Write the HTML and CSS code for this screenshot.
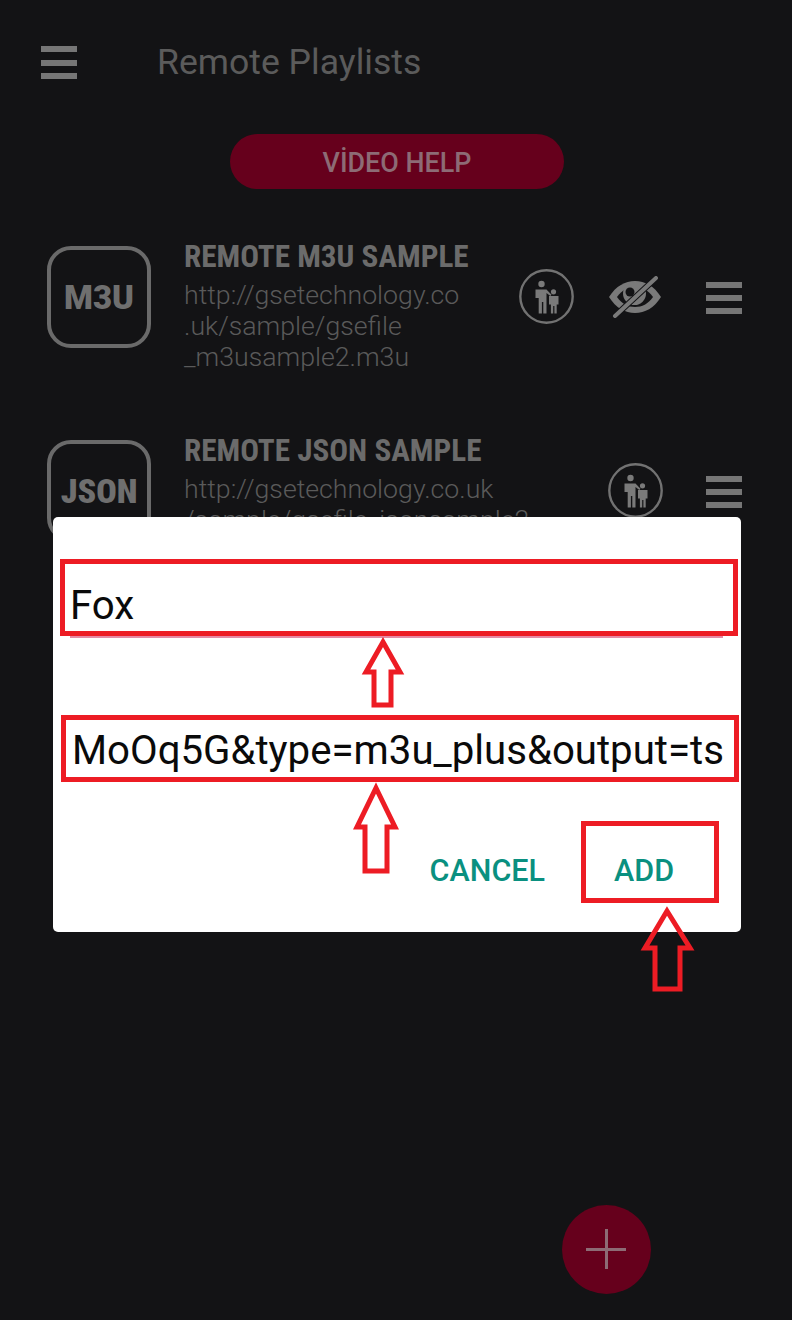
FILE: index.html
```html
<!DOCTYPE html>
<html lang="en">
<head>
<meta charset="UTF-8" />
<meta name="viewport" content="width=device-width, initial-scale=1.0"/>
<title>Remote Playlists</title>
<link rel="stylesheet" href="styles.css">
</head>
<body>

<div class="app">
  <header class="top-bar">
    <div class="bars top-bars"><span></span><span></span><span></span></div>
    <h1>Remote Playlists</h1>
  </header>

  <button type="button" class="help-btn">VİDEO HELP</button>

  <div class="playlist">
    <div class="row">
      <div class="type-box type-m3u">M3U</div>
      <div class="info">
        <h2>REMOTE M3U SAMPLE</h2>
        <p>http://gsetechnology.co<br>.uk/sample/gsefile<br>_m3usample2.m3u</p>
      </div>
      <div class="actions">
        <svg class="parental" viewBox="0 0 55 55">
          <circle cx="27.5" cy="27.5" r="26.2" fill="none" stroke="#727272" stroke-width="2.4"/>
          <circle cx="22.500" cy="15" r="3.200" fill="#7a7a7a"/>
          <path d="M16.500 20.500h11l5 5.200-1.200 1.200-3.800-3v20.600h-3.200V33h-1.400v11.500h-3.200V29h-3.200z" fill="#7a7a7a"/>
          <circle cx="34.500" cy="22.800" r="2.600" fill="#7a7a7a"/>
          <path d="M30 27h9.500v8.500h-1.800v9h-2.300V37h-1.200v7.500h-2.300v-9H30z" fill="#7a7a7a"/>
        </svg>
        <svg class="eye" viewBox="0 0 52 42">
          <path d="M0 21C7 10 16 5 26 5s19 5 26 16c-7 11-16 16-26 16S7 32 0 21z" fill="#7a7a7a"/>
          <path d="M8 21c5-7 11-10 18-10s13 3 18 10c-5 7-11 10-18 10S13 28 8 21z" fill="#131315"/>
          <circle cx="25.500" cy="17.500" r="11.500" fill="#7a7a7a"/>
          <circle cx="21" cy="16" r="4.500" fill="#131315"/>
          <path d="M6 40 47 2" stroke="#131315" stroke-width="6"/>
          <path d="M6 40 47 2" stroke="#7a7a7a" stroke-width="4" stroke-linecap="round"/>
        </svg>
        <div class="bars"><span></span><span></span><span></span></div>
      </div>
    </div>

    <div class="row">
      <div class="type-box">JSON</div>
      <div class="info">
        <h2>REMOTE JSON SAMPLE</h2>
        <p>http://gsetechnology.co.uk<br>/sample/gsefile_jsonsample2</p>
      </div>
      <div class="actions">
        <svg class="parental" viewBox="0 0 55 55">
          <circle cx="27.5" cy="27.5" r="26.2" fill="none" stroke="#727272" stroke-width="2.4"/>
          <circle cx="22.500" cy="15" r="3.200" fill="#7a7a7a"/>
          <path d="M16.500 20.500h11l5 5.200-1.200 1.200-3.800-3v20.600h-3.200V33h-1.400v11.500h-3.200V29h-3.200z" fill="#7a7a7a"/>
          <circle cx="34.500" cy="22.800" r="2.600" fill="#7a7a7a"/>
          <path d="M30 27h9.500v8.500h-1.800v9h-2.300V37h-1.200v7.500h-2.300v-9H30z" fill="#7a7a7a"/>
        </svg>
        <div class="bars"><span></span><span></span><span></span></div>
      </div>
    </div>
  </div>

  <div class="dialog">
    <div class="field field-name">Fox</div>
    <div class="field field-url">MoOq5G&amp;type=m3u_plus&amp;output=ts</div>
    <div class="dialog-actions">
      <span class="cancel">CANCEL</span>
      <span class="add">ADD</span>
    </div>
  </div>

  <!-- arrows drawn on top of the screenshot -->
  <svg class="arrows" viewBox="0 0 792 1320">
    <path d="M383 642 400 672H391V705H374V672H366z"/>
    <path d="M376 788 395 827H387V871H365V827H357z"/>
    <path d="M667 911 690 948H680V989H655V948H645z"/>
  </svg>

  <div class="fab"></div>
</div>

</body>
</html>
```

FILE: styles.css
```css
* {
  margin: 0;
  padding: 0;
  box-sizing: border-box;
  font-family: Roboto, "Liberation Sans", sans-serif;
}

body {
  background-color: #131315;
}

.app {
  position: relative;
  width: 792px;
  height: 1320px;
  overflow: hidden;
  background-color: #131315;
}

.top-bar {
  display: flex;
  align-items: center;
  gap: 80px;
  height: 124px;
  padding-left: 41px;
}

.top-bar h1 {
  font-size: 35.600px;
  font-weight: 400;
  color: #5b5b5b;
}

.bars {
  display: flex;
  flex-direction: column;
  justify-content: space-between;
  width: 36px;
  height: 32px;
  margin-top: 3px;
}

.bars span {
  height: 6px;
  background-color: #767676;
}

.top-bars {
  height: 33px;
  margin-top: 1px;
}

.help-btn {
  display: block;
  width: 334px;
  height: 55px;
  margin: 10px 0 53px 230px;
  padding-top: 2px;
  border: none;
  border-radius: 28px;
  background-color: #66001c;
  color: #8d6b75;
  font-size: 26.900px;
  font-weight: 500;
}

.row {
  display: flex;
  align-items: flex-start;
  height: 194px;
  padding-left: 47px;
}

.type-box {
  display: flex;
  flex-shrink: 0;
  justify-content: center;
  align-items: center;
  width: 104px;
  height: 102px;
  margin-top: 4px;
  margin-right: 33px;
  border: 4px solid #6a6a6a;
  border-radius: 24px;
  color: #6f6f6f;
  font-size: 34px;
  font-weight: 900;
  font-stretch: condensed;
}

.type-m3u {
  font-size: 33px;
  font-stretch: normal;
}

.info h2 {
  font-size: 31.200px;
  line-height: 30px;
  font-weight: 700;
  font-stretch: condensed;
  color: #6b6b6b;
  margin-bottom: 8px;
}

.info p {
  font-size: 26.700px;
  line-height: 31px;
  font-weight: 300;
  color: #5a5a5a;
  white-space: nowrap;
}

.actions {
  display: flex;
  align-items: center;
  margin-left: auto;
  padding: 27px 50px 0 0;
}

.parental {
  width: 55px;
  height: 55px;
  margin-right: 43px;
}

.row:first-child .parental {
  margin-right: 35px;
}

.eye {
  width: 52px;
  height: 42px;
  margin-right: 45px;
}

.dialog {
  position: absolute;
  left: 53px;
  top: 517px;
  width: 688px;
  height: 415px;
  padding: 42px 2px 0 7px;
  border-radius: 5px;
  background-color: #fff;
}

.field {
  display: flex;
  align-items: center;
  position: relative;
  border: 5px solid #ed1c24;
  color: #0a0a0a;
  font-size: 40.200px;
}

.field-name {
  height: 77px;
  margin-right: 1px;
  padding: 15px 0 0 5px;
}

/* the input underline that shows below the frame */
.field-name::after {
  content: "";
  position: absolute;
  left: 5px;
  right: 10px;
  bottom: -7px;
  height: 2px;
  background-color: #e58aa5;
}

.field-url {
  height: 67px;
  margin: 79px 0 0 1px;
  padding: 3px 0 0 6px;
  white-space: nowrap;
}

.dialog-actions {
  display: flex;
  justify-content: flex-end;
  align-items: center;
  gap: 36px;
  margin: 39px 20px 0 0;
  color: #0a9080;
  font-size: 30.500px;
  font-weight: 500;
}

.cancel {
  padding-top: 16px;
}

.add {
  width: 138px;
  height: 82px;
  padding: 27px 0 0 28px;
  border: 5px solid #ed1c24;
  line-height: 36px;
}

.arrows {
  position: absolute;
  left: 0;
  top: 0;
  width: 792px;
  height: 1320px;
  fill: none;
  stroke: #ed1c24;
  stroke-width: 5;
  pointer-events: none;
}

.fab {
  position: absolute;
  left: 562px;
  top: 1205px;
  width: 89px;
  height: 89px;
  border-radius: 50%;
  background-color: #66001c;
}

.fab::before,
.fab::after {
  content: "";
  position: absolute;
  background-color: #8d6b75;
}

.fab::before {
  left: 24px;
  top: 43px;
  width: 40px;
  height: 3px;
}

.fab::after {
  left: 43px;
  top: 24px;
  width: 3px;
  height: 40px;
}
```
